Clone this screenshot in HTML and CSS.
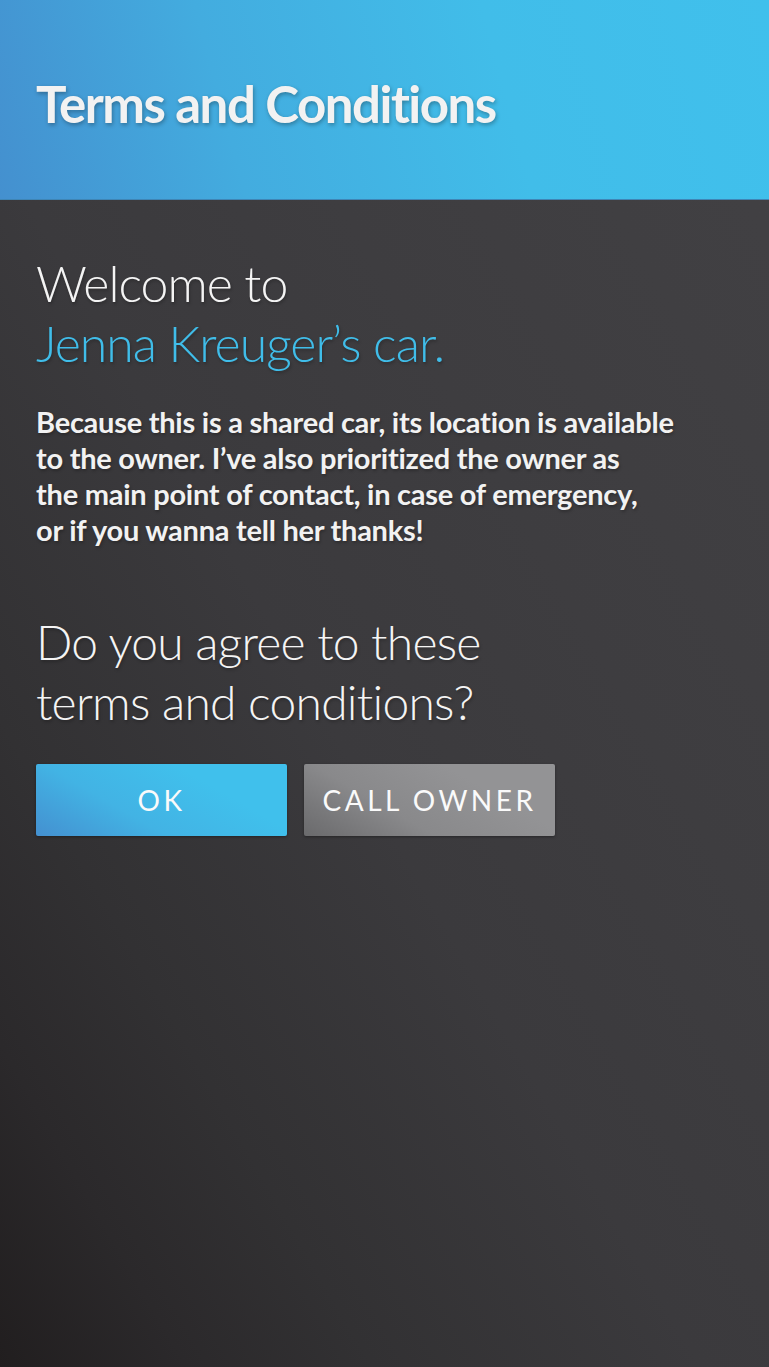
FILE: index.html
```html
<!DOCTYPE html>
<html>
<head>
<meta charset="utf-8">
<link rel="stylesheet" href="styles.css">
</head>
<body>
<div class="screen">
  <header class="header">
    <h1 class="title">Terms and Conditions</h1>
  </header>
  <main class="content">
    <h2 class="welcome">Welcome to<br><span class="accent">Jenna Kreuger’s car.</span></h2>
    <p class="body">Because this is a shared car, its location is available<br>to the owner. I’ve also prioritized the owner as<br>the main point of contact, in case of emergency,<br>or if you wanna tell her thanks!</p>
    <h2 class="question">Do you agree to these<br>terms and conditions?</h2>
    <div class="actions">
      <button class="btn btn-ok">OK</button>
      <button class="btn btn-call">CALL OWNER</button>
    </div>
  </main>
</div>
</body>
</html>
```

FILE: styles.css
```css
* { box-sizing: border-box; }
html, body { margin: 0; padding: 0; }
body {
  font-family: Lato, "Open Sans", sans-serif;
  width: 769px;
  height: 1367px;
  overflow: hidden;
}
.screen {
  width: 769px;
  height: 1367px;
  display: flex;
  flex-direction: column;
  background: linear-gradient(60deg, #211e1f 0%, #2b292b 12%, #323133 24%, #3b3a3d 45%, #3e3d40 65%, #424144 100%);
}
.header {
  height: 200px;
  flex: none;
  background: linear-gradient(75deg, #4490cf 0%, #43acdf 30%, #41bde9 65%, #40c0ec 100%);
  border-bottom: 1px solid #3f85b5;
  display: flex;
  align-items: center;
  padding: 8px 36px 0;
}
.title {
  margin: 0;
  color: #f2f2f2;
  font-weight: 700;
  font-size: 51px;
  line-height: 1.2;
  letter-spacing: -1.5px;
  text-shadow: 1px 2px 4px rgba(0,0,0,0.3);
}
.content {
  padding: 53px 36px 0;
}
.welcome, .question {
  margin: 0;
  font-weight: 300;
  line-height: 60px;
  color: #f4f4f4;
  text-shadow: 1px 2px 3px rgba(0,0,0,0.25);
}
.welcome {
  font-size: 50px;
  letter-spacing: -1px;
}
.accent { color: #40bde9; }
.body {
  margin: 31px 0 0;
  color: #f2f2f2;
  font-weight: 700;
  font-size: 29px;
  line-height: 36px;
  letter-spacing: -0.25px;
  text-shadow: 1px 2px 3px rgba(0,0,0,0.25);
}
.question {
  margin-top: 64px;
  font-size: 48px;
  letter-spacing: -0.75px;
}
.actions {
  margin-top: 32px;
  display: flex;
  gap: 17px;
}
.btn {
  width: 251px;
  height: 72px;
  border: none;
  border-radius: 2px;
  font-family: Lato, sans-serif;
  font-size: 28px;
  letter-spacing: 3.5px;
  color: #fafafa;
  box-shadow: 0 1px 3px rgba(0,0,0,0.35);
  padding: 0;
}
.btn-ok {
  background: linear-gradient(30deg, #4490d0 0%, #42b3e4 35%, #40c0ec 70%);
}
.btn-call {
  background: linear-gradient(30deg, #6a6a6c 0%, #89898b 35%, #939395 70%);
}
```
